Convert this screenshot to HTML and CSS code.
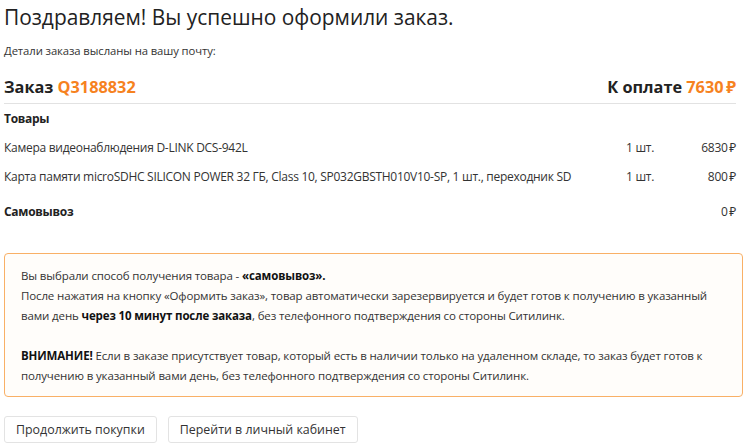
FILE: index.html
```html
<!DOCTYPE html>
<html lang="ru">
<head>
    <meta charset="UTF-8">
    <meta name="viewport" content="width=device-width, initial-scale=1.0">
    <title>Заказ оформлен</title>
    <link rel="stylesheet" href="styles.css">
</head>
<body>
    <div class="page">
        <h1>Поздравляем! Вы успешно оформили заказ.</h1>
        <p class="mail-note">Детали заказа высланы на вашу почту:</p>

        <div class="order">
            <div class="order-head">
                <div class="order-title">Заказ <span class="accent">Q3188832</span></div>
                <div class="order-total">К оплате <span class="accent">7630&thinsp;₽</span></div>
            </div>

            <div class="section-title">Товары</div>
            <div class="item">
                <div class="item-name">Камера видеонаблюдения D-LINK DCS-942L</div>
                <div class="item-qty">1 шт.</div>
                <div class="item-price">6830&thinsp;₽</div>
            </div>
            <div class="item">
                <div class="item-name">Карта памяти microSDHC SILICON POWER 32 ГБ, Class 10, SP032GBSTH010V10-SP, 1 шт., переходник SD</div>
                <div class="item-qty">1 шт.</div>
                <div class="item-price">800&thinsp;₽</div>
            </div>

            <div class="item delivery">
                <div class="item-name section-title">Самовывоз</div>
                <div class="item-price">0&thinsp;₽</div>
            </div>
        </div>

        <div class="notice">
            <p>Вы выбрали способ получения товара - <b>«самовывоз».</b><br>
            После нажатия на кнопку «Оформить заказ», товар автоматически зарезервируется и будет готов к получению в указанный вами день <b>через 10 минут после заказа</b>, без телефонного подтверждения со стороны Ситилинк.</p>
            <p><b>ВНИМАНИЕ!</b> Если в заказе присутствует товар, который есть в наличии только на удаленном складе, то заказ будет готов к получению в указанный вами день, без телефонного подтверждения со стороны Ситилинк.</p>
        </div>

        <div class="actions">
            <button class="btn">Продолжить покупки</button>
            <button class="btn">Перейти в личный кабинет</button>
        </div>
    </div>
</body>
</html>
```

FILE: styles.css
```css
body {
    margin: 0;
    padding: 0;
    background-color: #fff;
    color: #333;
    font-family: 'Open Sans', 'Noto Sans', sans-serif;
    font-size: 12px;
    letter-spacing: -0.28px;
}

.page {
    width: 739px;
    padding: 0 4px;
}

h1 {
    margin: 0;
    padding-top: 1px;
    font-size: 20.9px;
    font-weight: 400;
    line-height: 32px;
    letter-spacing: 0;
    color: #222;
}

.mail-note {
    margin: 9px 0 0;
    font-size: 11.3px;
    letter-spacing: -0.1px;
    line-height: 18px;
}

.order {
    margin-top: 11px;
    padding-right: 7px;
}

.order-head {
    display: flex;
    justify-content: space-between;
    align-items: center;
    height: 32px;
    border-bottom: 1px solid #e2e2e2;
    font-size: 16.3px;
    font-weight: 700;
    letter-spacing: 0;
    color: #222;
}

.accent {
    color: #f6821f;
}

.section-title {
    font-weight: 700;
    color: #222;
}

.order > .section-title {
    margin: 5px 0 4px;
    line-height: 20px;
}

.item {
    display: flex;
    align-items: center;
    height: 29px;
    line-height: 20px;
}

.item-name {
    flex: 1;
}

.item-qty {
    width: 70px;
}

.item-price {
    width: 40px;
    text-align: right;
}

.delivery {
    margin-top: 6px;
}

.notice {
    margin-top: 27px;
    padding: 12px 30px 10px 16px;
    border: 1px solid #f9b066;
    border-radius: 4px;
    background-color: #fffdfa;
    font-size: 11.5px;
    letter-spacing: -0.13px;
    line-height: 20px;
}

.notice p {
    margin: 0;
}

.notice p + p {
    margin-top: 20px;
}

.notice b {
    color: #111;
}

.actions {
    display: flex;
    gap: 11px;
    margin-top: 19px;
}

.btn {
    height: 27px;
    padding: 0 11px;
    border: 1px solid #e3e3e3;
    border-radius: 3px;
    background-color: #fff;
    color: #333;
    font-family: inherit;
    font-size: 12.4px;
    letter-spacing: 0;
    cursor: pointer;
}
```
